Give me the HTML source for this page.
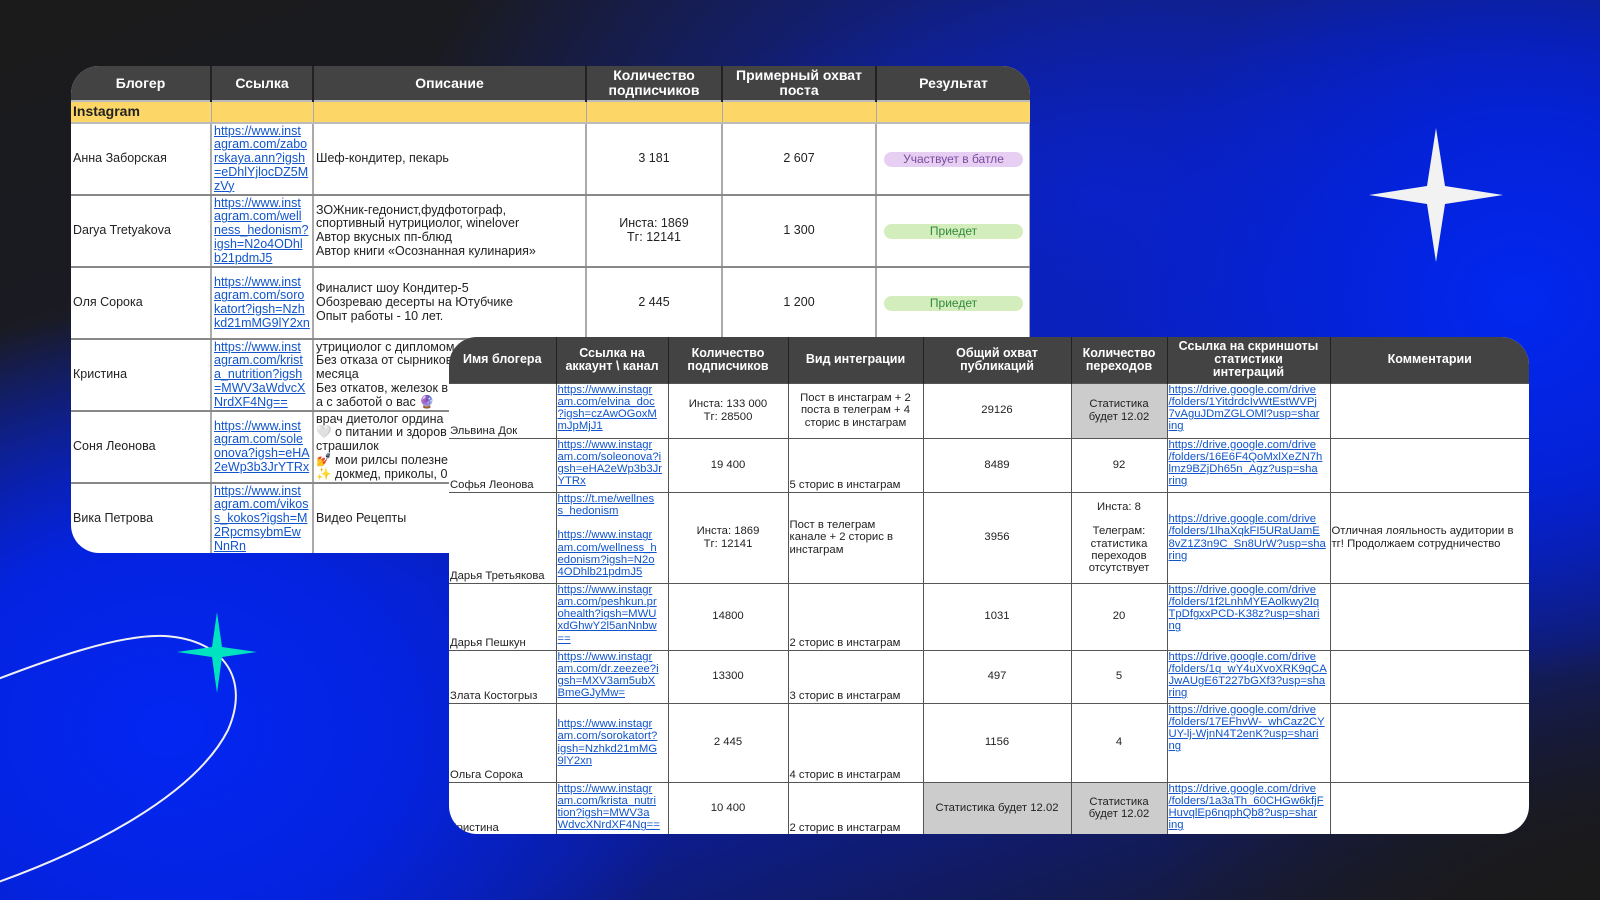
<!DOCTYPE html>
<html><head><meta charset="utf-8">
<style>
*{margin:0;padding:0;box-sizing:border-box}
html,body{width:1600px;height:900px;overflow:hidden}
body{position:relative;font-family:"Liberation Sans","Noto Sans CJK SC",sans-serif;
background:
radial-gradient(ellipse 500px 300px at 1640px 940px,#1a1a1a 0%,rgba(26,26,26,0.8) 40%,rgba(26,26,26,0) 100%),
radial-gradient(ellipse 520px 420px at 170px 730px,#0326f2 0%,#0423e0 45%,rgba(6,30,200,0) 100%),
radial-gradient(ellipse 420px 380px at 1520px 300px,#0228f0 0%,#0422d8 45%,rgba(6,30,200,0) 100%),
radial-gradient(ellipse 700px 500px at 1100px 200px,#0a22c8 0%,rgba(10,34,200,0) 100%),
linear-gradient(160deg,#1b1b1b 0%,#1a1b22 22%,#0b1ea8 50%,#0c1c90 72%,#1a1a1a 100%);}
svg.bg{position:absolute;left:0;top:0}
.t{position:absolute;overflow:hidden;background:#fff}
table{border-collapse:collapse;table-layout:fixed;width:100%}
td,th{overflow:hidden;white-space:nowrap}
#t1{left:71px;top:66px;width:959px;height:487px;border-radius:28px 28px 0 28px}
#t1 th{background:#434343;color:#fff;font-weight:bold;font-size:14px;line-height:15px;height:35px;border-right:2px solid #222;text-align:center}
#t1 th:last-child{border-right:none}
#t1 tr.y td{background:#fdd668;height:22px;font-weight:bold;font-size:14px;border-top:2px solid #bbb;border-bottom:2px solid #bbb;border-right:1px solid #aaa;padding-left:2px}
#t1 td{font-size:12.5px;color:#222;line-height:13.7px;border-right:2px solid #aaa;border-bottom:2px solid #888;vertical-align:middle;padding:0 2px}
#t1 tr.r td{height:72px}
#t1 td.c{text-align:center}
a{color:#1155cc;text-decoration:underline}
.pill{display:block;margin:0 4px 0 5px;height:15px;border-radius:8px;font-size:12px;line-height:15px;text-align:center}
.pu{background:#e6cff2;color:#7a4b9e}
.gr{background:#d4edbc;color:#2f8a3a}
#t2{left:449px;top:337px;width:1080px;height:497px;border-radius:28px}
#t2 th{background:#434343;color:#fff;font-weight:bold;font-size:12.5px;line-height:13px;height:46px;border-right:1px solid #222;text-align:center;white-space:normal}
#t2 th:last-child{border-right:none}
#t2 td{font-size:11.3px;color:#222;line-height:12.3px;border-right:1px solid #555;border-top:1px solid #555;padding:0 1px}
#t2 td:last-child{border-right:none}
#t2 .b{vertical-align:bottom}
#t2 .tp{vertical-align:top}
#t2 .m{vertical-align:middle;text-align:center}
#t2 .ml{vertical-align:middle;text-align:left}
#t2 .g{background:#cccccc}
</style></head><body>
<svg class="bg" width="1600" height="900">
<path d="M -30 690 C 50 658, 120 634, 165 636 C 225 640, 250 680, 228 730 C 195 795, 90 850, -10 885" fill="none" stroke="#f0f0f0" stroke-width="2"/>
<path d="M 1436 128 L 1445 186 L 1503 195 L 1445 204 L 1436 262 L 1427 204 L 1369 195 L 1427 186 Z" fill="#f2f2f2"/>
<path d="M 217 612 L 222 647 L 257 652 L 222 657 L 217 693 L 212 657 L 177 652 L 212 647 Z" fill="#00e3c0"/>
</svg>

<div class="t" id="t1">
<table>
<colgroup><col style="width:140px"><col style="width:102px"><col style="width:273px"><col style="width:136px"><col style="width:154px"><col style="width:154px"></colgroup>
<tr><th>Блогер</th><th>Ссылка</th><th>Описание</th><th>Количество<br>подписчиков</th><th>Примерный охват<br>поста</th><th>Результат</th></tr>
<tr class="y"><td>Instagram</td><td></td><td></td><td></td><td></td><td></td></tr>
<tr class="r"><td>Анна Заборская</td><td><a>https://www.inst<br>agram.com/zabo<br>rskaya.ann?igsh<br>=eDhlYjlocDZ5M<br>zVy</a></td><td>Шеф-кондитер, пекарь</td><td class="c">3 181</td><td class="c">2 607</td><td><span class="pill pu">Участвует в батле</span></td></tr>
<tr class="r"><td>Darya Tretyakova</td><td><a>https://www.inst<br>agram.com/well<br>ness_hedonism?<br>igsh=N2o4ODhl<br>b21pdmJ5</a></td><td>ЗОЖник-гедонист,фудфотограф,<br>спортивный нутрициолог, winelover<br>Автор вкусных пп-блюд<br>Автор книги «Осознанная кулинария»</td><td class="c">Инста: 1869<br>Тг: 12141</td><td class="c">1 300</td><td><span class="pill gr">Приедет</span></td></tr>
<tr class="r"><td>Оля Сорока</td><td><a>https://www.inst<br>agram.com/soro<br>katort?igsh=Nzh<br>kd21mMG9lY2xn</a></td><td>Финалист шоу Кондитер-5<br>Обозреваю десерты на Ютубчике<br>Опыт работы - 10 лет.</td><td class="c">2 445</td><td class="c">1 200</td><td><span class="pill gr">Приедет</span></td></tr>
<tr class="r"><td>Кристина</td><td><a>https://www.inst<br>agram.com/krist<br>a_nutrition?igsh<br>=MWV3aWdvcX<br>NrdXF4Ng==</a></td><td>утрициолог с дипломом<br>Без отказа от сырников<br>месяца<br>Без откатов, железок в<br>а с заботой о вас 🔮</td><td></td><td></td><td></td></tr>
<tr class="r"><td>Соня Леонова</td><td><a>https://www.inst<br>agram.com/sole<br>onova?igsh=eHA<br>2eWp3b3JrYTRx</a></td><td>врач диетолог ордина<br>🤍 о питании и здоров<br>страшилок<br>💅 мои рилсы полезне<br>✨ докмед, приколы, 0</td><td></td><td></td><td></td></tr>
<tr class="r"><td>Вика Петрова</td><td><a>https://www.inst<br>agram.com/vikos<br>s_kokos?igsh=M<br>2RpcmsybmEw<br>NnRn</a></td><td>Видео Рецепты</td><td></td><td></td><td></td></tr>
</table>
</div>

<div class="t" id="t2">
<table>
<colgroup><col style="width:107px"><col style="width:112px"><col style="width:120px"><col style="width:135px"><col style="width:148px"><col style="width:96px"><col style="width:163px"><col style="width:199px"></colgroup>
<tr><th>Имя блогера</th><th>Ссылка на<br>аккаунт \ канал</th><th>Количество<br>подписчиков</th><th>Вид интеграции</th><th>Общий охват<br>публикаций</th><th>Количество<br>переходов</th><th>Ссылка на скриншоты<br>статистики<br>интеграций</th><th>Комментарии</th></tr>
<tr style="height:55px"><td class="b">Эльвина Док</td><td class="tp"><a>https://www.instagr<br>am.com/elvina_doc<br>?igsh=czAwOGoxM<br>mJpMjJ1</a></td><td class="m">Инста: 133 000<br>Тг: 28500</td><td class="m">Пост в инстаграм + 2<br>поста в телеграм + 4<br>сторис в инстаграм</td><td class="m">29126</td><td class="m g">Статистика<br>будет 12.02</td><td class="tp"><a>https://drive.google.com/drive<br>/folders/1YitdrdcIvWtEstWVPj<br>7vAguJDmZGLOMl?usp=shar<br>ing</a></td><td></td></tr>
<tr style="height:54px"><td class="b">Софья Леонова</td><td class="tp"><a>https://www.instagr<br>am.com/soleonova?i<br>gsh=eHA2eWp3b3Jr<br>YTRx</a></td><td class="m">19 400</td><td class="b">5 сторис в инстаграм</td><td class="m">8489</td><td class="m">92</td><td class="tp"><a>https://drive.google.com/drive<br>/folders/16E6F4QoMxlXeZN7h<br>lmz9BZjDh65n_Agz?usp=sha<br>ring</a></td><td></td></tr>
<tr style="height:91px"><td class="b">Дарья Третьякова</td><td class="tp"><a>https://t.me/wellnes<br>s_hedonism</a><br><br><a>https://www.instagr<br>am.com/wellness_h<br>edonism?igsh=N2o<br>4ODhlb21pdmJ5</a></td><td class="m">Инста: 1869<br>Тг: 12141</td><td class="ml">Пост в телеграм<br>канале + 2 сторис в<br>инстаграм</td><td class="m">3956</td><td class="m">Инста: 8<br><br>Телеграм:<br>статистика<br>переходов<br>отсутствует</td><td class="ml"><a>https://drive.google.com/drive<br>/folders/1lhaXqkFI5URaUamE<br>8vZ1Z3n9C_Sn8UrW?usp=sha<br>ring</a></td><td class="ml">Отличная лояльность аудитории в<br>тг! Продолжаем сотрудничество</td></tr>
<tr style="height:67px"><td class="b">Дарья Пешкун</td><td class="tp"><a>https://www.instagr<br>am.com/peshkun.pr<br>ohealth?igsh=MWU<br>xdGhwY2l5anNnbw<br>==</a></td><td class="m">14800</td><td class="b">2 сторис в инстаграм</td><td class="m">1031</td><td class="m">20</td><td class="tp"><a>https://drive.google.com/drive<br>/folders/1f2LnhMYEAolkwy2Iq<br>TpDfgxxPCD-K38z?usp=shari<br>ng</a></td><td></td></tr>
<tr style="height:53px"><td class="b">Злата Костогрыз</td><td class="tp"><a>https://www.instagr<br>am.com/dr.zeezee?i<br>gsh=MXV3am5ubX<br>BmeGJyMw=</a></td><td class="m">13300</td><td class="b">3 сторис в инстаграм</td><td class="m">497</td><td class="m">5</td><td class="tp"><a>https://drive.google.com/drive<br>/folders/1q_wY4uXvoXRK9qCA<br>JwAUgE6T227bGXf3?usp=sha<br>ring</a></td><td></td></tr>
<tr style="height:79px"><td class="b">Ольга Сорока</td><td class="ml"><a>https://www.instagr<br>am.com/sorokatort?<br>igsh=Nzhkd21mMG<br>9lY2xn</a></td><td class="m">2 445</td><td class="b">4 сторис в инстаграм</td><td class="m">1156</td><td class="m">4</td><td class="tp"><a>https://drive.google.com/drive<br>/folders/17EFhvW-_whCaz2CY<br>UY-lj-WjnN4T2enK?usp=shari<br>ng</a></td><td></td></tr>
<tr style="height:52px"><td class="b">Кристина</td><td class="tp"><a>https://www.instagr<br>am.com/krista_nutri<br>tion?igsh=MWV3a<br>WdvcXNrdXF4Ng==</a></td><td class="m">10 400</td><td class="b">2 сторис в инстаграм</td><td class="m g">Статистика будет 12.02</td><td class="m g">Статистика<br>будет 12.02</td><td class="tp"><a>https://drive.google.com/drive<br>/folders/1a3aTh_60CHGw6kfjF<br>HuvqlEp6nqphQb8?usp=shar<br>ing</a></td><td></td></tr>
</table>
</div>
</body></html>
